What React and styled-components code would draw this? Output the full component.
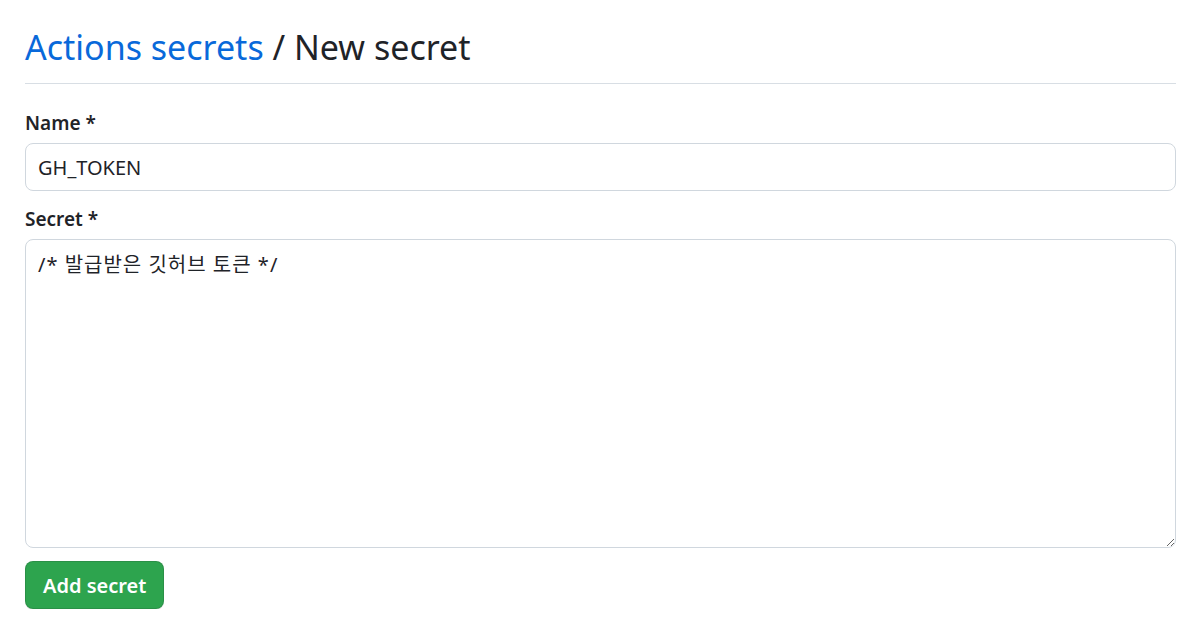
import React from "react";
import styled, { createGlobalStyle } from "styled-components";

const Global = createGlobalStyle`
  html, body { margin: 0; padding: 0; background: #ffffff; }
  body { font-family: "Noto Sans", "Noto Sans CJK KR", sans-serif; color: #1f2328; }
`;

const Page = styled.div`
  padding: 24px 24px 0 25px;
  display: flex;
  flex-direction: column;
`;

const Header = styled.h2`
  margin: 0;
  padding-bottom: 13px;
  border-bottom: 1px solid #d8dee4;
  font-size: 34px;
  font-weight: 400;
  line-height: 46px;
  color: #1f2328;
`;

const Crumb = styled.a`
  color: #0969da;
  text-decoration: none;
`;

const Form = styled.form`
  display: flex;
  flex-direction: column;
  padding-top: 25px;
`;

const Field = styled.div`
  display: flex;
  flex-direction: column;
  margin-bottom: ${(p) => p.$gap || 14}px;
`;

const Label = styled.label`
  font-size: 19px;
  font-weight: 600;
  line-height: 26px;
  margin-top: 1px;
  margin-bottom: 7px;
`;

const Input = styled.input`
  box-sizing: border-box;
  height: 48px;
  padding: 0 12px;
  font-family: "Noto Sans", "Noto Sans CJK KR", sans-serif;
  font-size: 20px;
  color: #1f2328;
  border: 1px solid #d0d7de;
  border-radius: 8px;
  background: #fff;
  outline: none;
`;

const TextArea = styled.textarea`
  box-sizing: border-box;
  height: 309px;
  padding: 11px 12px;
  font-family: "Noto Sans", "Noto Sans CJK KR", sans-serif;
  font-size: 20px;
  letter-spacing: 1px;
  line-height: 28px;
  color: #1f2328;
  border: 1px solid #d0d7de;
  border-radius: 8px;
  background: #fff;
  resize: vertical;
  outline: none;
`;

const Button = styled.button`
  align-self: flex-start;
  box-sizing: border-box;
  height: 48px;
  padding: 0 17px;
  font-family: "Noto Sans", sans-serif;
  font-size: 20px;
  font-weight: 600;
  color: #ffffff;
  background: #2da44e;
  border: 1px solid rgba(27, 31, 36, 0.15);
  border-radius: 8px;
  box-shadow: 0 1px 0 rgba(27, 31, 36, 0.1);
  cursor: pointer;
`;

export default function App() {
  return (
    <>
      <Global />
      <Page>
        <Header>
          <Crumb href="#">Actions secrets</Crumb> / New secret
        </Header>
        <Form onSubmit={(e) => e.preventDefault()}>
          <Field>
            <Label>Name *</Label>
            <Input defaultValue="GH_TOKEN" />
          </Field>
          <Field $gap={13}>
            <Label>Secret *</Label>
            <TextArea defaultValue="/* 발급받은 깃허브 토큰 */" />
          </Field>
          <Button type="submit">Add secret</Button>
        </Form>
      </Page>
    </>
  );
}
